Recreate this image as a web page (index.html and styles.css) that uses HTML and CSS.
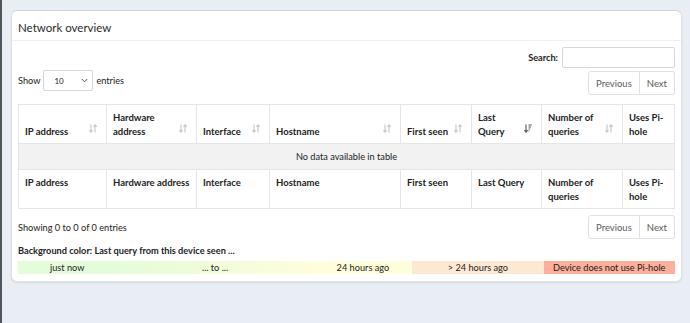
FILE: index.html
```html
<!DOCTYPE html>
<html lang="en">
<head>
    <meta charset="UTF-8">
    <meta name="viewport" content="width=device-width, initial-scale=1.0">
    <title>Network overview</title>
    <link rel="stylesheet" href="styles.css">
</head>
<body>
    <div class="sidebar-edge"></div>
    <main class="content">
        <section class="box">
            <div class="box-header">
                <h3 class="box-title">Network overview</h3>
            </div>
            <div class="box-body">
                <div class="dt-top">
                    <label class="dt-search">Search: <input type="search"></label>
                </div>
                <div class="dt-controls">
                    <div class="dt-length">
                        Show
                        <div class="fake-select">
                            <span>10</span>
                            <svg width="7" height="5" viewBox="0 0 7 5"><path d="M0.8 1 L3.5 3.8 L6.2 1" fill="none" stroke="#444" stroke-width="0.9"/></svg>
                        </div>
                        entries
                    </div>
                    <div class="pager pager-top">
                        <button>Previous</button><button>Next</button>
                    </div>
                </div>

                <table class="net-table">
                    <colgroup>
                        <col style="width:88px">
                        <col style="width:90px">
                        <col style="width:73px">
                        <col style="width:131px">
                        <col style="width:71px">
                        <col style="width:70px">
                        <col style="width:81px">
                        <col style="width:52px">
                    </colgroup>
                    <thead>
                        <tr>
                            <th class="sortable">IP address</th>
                            <th class="sortable">Hardware address</th>
                            <th class="sortable">Interface</th>
                            <th class="sortable">Hostname</th>
                            <th class="sortable">First seen</th>
                            <th class="sortable active">Last Query</th>
                            <th class="sortable">Number of queries</th>
                            <th>Uses Pi-hole</th>
                        </tr>
                    </thead>
                    <tbody>
                        <tr class="empty-row">
                            <td colspan="8">No data available in table</td>
                        </tr>
                    </tbody>
                    <tfoot>
                        <tr>
                            <th>IP address</th>
                            <th>Hardware address</th>
                            <th>Interface</th>
                            <th>Hostname</th>
                            <th>First seen</th>
                            <th>Last Query</th>
                            <th>Number of queries</th>
                            <th>Uses Pi-hole</th>
                        </tr>
                    </tfoot>
                </table>

                <div class="dt-bottom">
                    <div class="dt-info">Showing 0 to 0 of 0 entries</div>
                    <div class="pager">
                        <button>Previous</button><button>Next</button>
                    </div>
                </div>

                <p class="legend-title">Background color: Last query from this device seen ...</p>
                <table class="legend">
                    <tr>
                        <td class="recent" style="width:15%">just now</td>
                        <td class="fade" style="width:30%">... to ...</td>
                        <td class="old" style="width:15%">24 hours ago</td>
                        <td class="older" style="width:20%">&gt; 24 hours ago</td>
                        <td class="never" style="width:20%">Device does not use Pi-hole</td>
                    </tr>
                </table>
            </div>
        </section>
    </main>
    <script>
        // sort icons are drawn once for every sortable header
        document.querySelectorAll('.net-table th.sortable').forEach(th => {
            const icon = th.classList.contains('active')
                ? '<svg width="8" height="9" viewBox="0 0 8 9"><path d="M2 0.5 V8 M0.4 6.2 L2 8.2 L3.6 6.2" fill="none" stroke="#555" stroke-width="1.1"/><path d="M4.5 1 H7.8 M4.5 3 H7 M4.5 5 H6.2 M4.5 7 H5.4" stroke="#555" stroke-width="1"/></svg>'
                : '<svg width="8" height="9" viewBox="0 0 8 9"><path d="M2 0.5 V8 M0.4 6.2 L2 8.2 L3.6 6.2" fill="none" stroke="#cbcbcb" stroke-width="1.2"/><path d="M6 8.5 V1 M4.4 2.8 L6 0.8 L7.6 2.8" fill="none" stroke="#cbcbcb" stroke-width="1.2"/></svg>';
            th.insertAdjacentHTML('beforeend', '<span class="sort-icon">' + icon + '</span>');
        });
    </script>
</body>
</html>
```

FILE: styles.css
```css
body {
    margin: 0;
    display: flex;
    min-height: 323px;
    background-color: #e9edf4;
    font-family: Lato, "Noto Sans", sans-serif;
    font-size: 9.2px;
    color: #222;
}

.sidebar-edge {
    width: 2px;
    background-color: #50565d;
    flex-shrink: 0;
}

.content {
    flex: 1;
    padding: 10px 10px 0 9px;
}

.box {
    background-color: #fff;
    border: 1px solid #dde1e7;
    border-top-color: #cfd3d9;
    border-radius: 6px;
    box-shadow: 0 1px 2px rgba(0, 0, 0, 0.08);
}

.box-header {
    height: 30px;
    box-sizing: border-box;
    display: flex;
    align-items: center;
    padding: 3px 6px 0 6px;
    border-bottom: 1px solid #eef0f3;
}

.box-title {
    margin: 0;
    font-size: 11.5px;
    font-weight: 400;
    color: #2a2a2a;
}

.box-body {
    padding: 6px 6px 7px 6px;
}

.dt-top {
    display: flex;
    justify-content: flex-end;
    margin-bottom: 2px;
}

.dt-search {
    display: flex;
    align-items: center;
    gap: 4px;
    font-weight: 700;
}

.dt-search input {
    width: 113px;
    height: 21px;
    box-sizing: border-box;
    border: 1px solid #d4d8dd;
    border-radius: 2px;
    margin: 0;
}

.dt-controls {
    display: flex;
    justify-content: space-between;
    align-items: flex-start;
}

.dt-length {
    display: flex;
    align-items: center;
    gap: 3px;
    height: 21px;
}

.fake-select {
    width: 50px;
    height: 21px;
    box-sizing: border-box;
    border: 1px solid #d4d8dd;
    border-radius: 2px;
    display: flex;
    align-items: center;
    justify-content: space-between;
    padding: 0 4px 0 10px;
    font-size: 8px;
}

.pager {
    display: flex;
}

.pager-top {
    margin-top: 1px;
}

.pager button {
    height: 24px;
    padding: 0 7px;
    font-family: inherit;
    font-size: 9.5px;
    color: #5a5a5a;
    background-color: #fff;
    border: 1px solid #dee2e6;
    cursor: pointer;
}

.pager button:first-child {
    border-radius: 3px 0 0 3px;
}

.pager button:last-child {
    border-left: none;
    border-radius: 0 3px 3px 0;
}

.net-table {
    width: 100%;
    table-layout: fixed;
    border-collapse: collapse;
    margin-top: 9px;
    line-height: 13.5px;
}

.net-table th,
.net-table td {
    border: 1px solid #e3e6ea;
    text-align: left;
}

.net-table th {
    font-size: 9.5px;
    font-weight: 700;
}

.net-table thead th {
    position: relative;
    vertical-align: bottom;
    padding: 5px 6px 5px 6px;
    height: 28px;
}

.net-table thead th.sortable {
    padding-right: 20px;
}

.net-table tfoot th {
    vertical-align: top;
    padding: 6px 6px 5px 6px;
    height: 27px;
}

.sort-icon {
    position: absolute;
    right: 9px;
    bottom: 10px;
    display: flex;
}

.empty-row td {
    background-color: #f2f2f2;
    text-align: center;
    height: 25px;
    padding: 0;
}

.dt-bottom {
    display: flex;
    justify-content: space-between;
    align-items: center;
    margin-top: 6px;
}

.legend-title {
    margin: 5px 0 4px 0;
    font-weight: 700;
    line-height: 13px;
}

.legend {
    width: 100%;
    border-collapse: collapse;
    table-layout: fixed;
}

.legend td {
    height: 13px;
    padding: 0;
    text-align: center;
    line-height: 13px;
}

.legend .recent {
    background-color: #e5fcda;
}

.legend .fade {
    background-image: linear-gradient(to right, #e5fcda 0%, #fefddc 100%);
}

.legend .old {
    background-color: #fefddc;
}

.legend .older {
    background-color: #fde8d3;
}

.legend .never {
    background-color: #fdaf9b;
}
```
